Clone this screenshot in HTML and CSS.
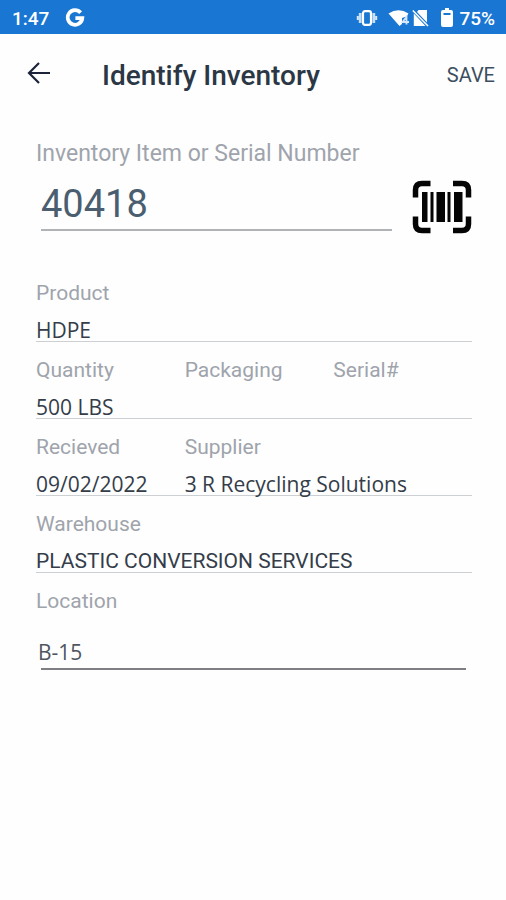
FILE: index.html
```html
<!DOCTYPE html>
<html lang="en">
<head>
<meta charset="utf-8">
<meta name="viewport" content="width=device-width, initial-scale=1">
<title>Identify Inventory</title>
<link rel="stylesheet" href="styles.css">
</head>
<body>
<div class="status-bar">
  <span class="status-time">1:47</span>
  <svg class="icon-google" viewBox="0 0 20 20" aria-hidden="true"><path d="M15.6 4.700A7.300 7.300 0 1 0 17.300 10.200H10.400" fill="none" stroke="#fff" stroke-width="3.700"/></svg>
  <div class="status-icons">
    <svg class="icon-vibrate" viewBox="0 0 22 18" aria-hidden="true"><rect x="7" y="2.200" width="8" height="13.600" rx="2" fill="none" stroke="#fff" stroke-width="2.200"/><path d="M4.200 4v10M17.800 4v10" stroke="#c5defa" stroke-width="2.800"/><path d="M1.800 7v4M20.200 7v4" stroke="#dcebfb" stroke-width="2"/></svg>
    <svg class="icon-wifi" viewBox="0 0 22 18" aria-hidden="true"><path d="M.5 4.500Q10.500-1.800 20.500 4.500L18.500 7.500 14 9v6l-2.500 2Z" fill="#fff"/><path d="M18.500 15.500V8l-4 5h6.500" fill="none" stroke="#d5e7fb" stroke-width="1.800"/></svg>
    <svg class="icon-sim" viewBox="0 0 17 18" aria-hidden="true"><path d="M6.500 1H15v12.500L5 3ZM1.800 4.500 13.500 17H1.800Z" fill="#fff"/><path d="M.8 1.500 16 17" stroke="#fff" stroke-width="1.500"/></svg>
    <svg class="icon-battery" viewBox="0 0 12 20" aria-hidden="true"><path d="M4 0h4v2h2q2 0 2 2v13q0 2-2 2H2q-2 0-2-2V4q0-2 2-2h2Z" fill="#fff"/><path d="M2.500 5h7v2h-7Z" fill="#1976d2"/></svg>
    <span class="status-battery">75%</span>
  </div>
</div>

<header class="app-bar">
  <button class="back" type="button" aria-label="Back">
    <svg viewBox="0 0 24 24" aria-hidden="true"><path d="M23 12H2.500M12 2 2 12l10 10" fill="none" stroke="#1d2339" stroke-width="2.200"/></svg>
  </button>
  <h1 class="title">Identify Inventory</h1>
  <button class="save" type="submit" form="inventory">SAVE</button>
</header>

<form class="content" id="inventory">
  <label class="search-label" for="item">Inventory Item or Serial Number</label>
  <div class="search">
    <input class="search-input" id="item" type="text" value="40418">
    <button class="scan" type="button" aria-label="Scan barcode">
      <svg viewBox="0 0 60 54" aria-hidden="true"><path d="M18.500 3.500H10Q3.500 3.500 3.500 10v7.500M41 3.500h9q6.500 0 6.500 6.500v7.500M18.500 50.500H10q-6.500 0-6.500-6.500v-7.500M41 50.500h9q6.500 0 6.500-6.500v-7.500" fill="none" stroke="#050505" stroke-width="5.500"/><path d="M10 12h5.500v30H10ZM18.500 12H21.500v30h-3ZM24.500 12H33v30h-8.500ZM35.500 12H38.500v30h-3ZM42 12h8.500v30H42Z" fill="#050505"/></svg>
    </button>
  </div>

  <div class="row">
    <dl class="field full"><dt>Product</dt><dd>HDPE</dd></dl>
  </div>
  <div class="row">
    <dl class="field"><dt>Quantity</dt><dd>500 LBS</dd></dl>
    <dl class="field"><dt>Packaging</dt><dd></dd></dl>
    <dl class="field"><dt>Serial#</dt><dd></dd></dl>
  </div>
  <div class="row">
    <dl class="field"><dt>Recieved</dt><dd>09/02/2022</dd></dl>
    <dl class="field double"><dt>Supplier</dt><dd>3 R Recycling Solutions</dd></dl>
  </div>
  <div class="row">
    <dl class="field full"><dt>Warehouse</dt><dd class="warehouse">PLASTIC CONVERSION SERVICES</dd></dl>
  </div>
  <label class="location-label" for="location">Location</label>
  <input class="location-input" id="location" type="text" value="B-15">
</form>
</body>
</html>
```

FILE: styles.css
```css
* {
  box-sizing: border-box;
}

body {
  margin: 0;
  background: #fefefe;
  color: #343d49;
  font-family: Roboto, "Liberation Sans", sans-serif;
}

button {
  padding: 0;
  border: 0;
  background: none;
  font: inherit;
  cursor: pointer;
}

svg {
  display: block;
}

.status-bar {
  display: flex;
  align-items: center;
  height: 34px;
  padding: 2px 11px 0 12px;
  background: #1976d2;
  color: #fff;
  font-size: 19px;
  font-weight: 500;
}

.icon-google {
  width: 20px;
  height: 20px;
  margin-left: 16px;
}

.status-icons {
  display: flex;
  align-items: center;
  margin-left: auto;
}

.icon-vibrate {
  width: 22px;
  height: 18px;
  margin-right: 10px;
}

.icon-wifi {
  width: 22px;
  height: 18px;
  margin-right: 2px;
}

.icon-sim {
  width: 17px;
  height: 18px;
  margin-right: 12px;
}

.icon-battery {
  width: 12px;
  height: 20px;
  margin-right: 6px;
}

.app-bar {
  display: flex;
  align-items: center;
  height: 84px;
  padding: 0 11px 0 27px;
}

.back {
  width: 24px;
  height: 24px;
  margin-bottom: 6px;
}

.title {
  flex: 1;
  margin: 0 0 0 51px;
  color: #2b3744;
  font-size: 28px;
  font-weight: 500;
  line-height: 32px;
}

.save {
  margin-bottom: 2px;
  color: #3c4e60;
  font-size: 20px;
}

.content {
  padding: 24px 34px 0 36px;
}

.search-label,
.location-label,
.field dt {
  display: block;
  color: #9fa4ac;
  font-size: 21px;
  line-height: 24px;
}

.search-label {
  font-size: 23px;
}

.search {
  display: flex;
  gap: 20px;
  margin-bottom: 47px;
  padding-left: 5px;
}

.search-input {
  flex: 1;
  min-width: 0;
  height: 52px;
  margin-top: 13px;
  padding: 0;
  border: 0;
  border-bottom: 2px solid #b0b4b6;
  background: none;
  color: #4a5e70;
  font: 38px Roboto, sans-serif;
  outline: 0;
}

.scan {
  width: 60px;
  height: 54px;
  margin-top: 14px;
}

.row {
  display: grid;
  grid-template-columns: repeat(3, 1fr);
  column-gap: 10px;
  margin-bottom: 16px;
  border-bottom: 1px solid #ccd0d2;
}

.field {
  min-width: 0;
  margin: 0;
}

.double {
  grid-column: span 2;
}

.full {
  grid-column: 1 / -1;
}

.field dd {
  height: 24px;
  margin: 12px 0 0;
  font-family: "Open Sans", sans-serif;
  font-size: 21px;
  line-height: 26px;
  white-space: nowrap;
}

.field .warehouse {
  font-family: Roboto, sans-serif;
}

.location-input {
  display: block;
  width: calc(100% - 8px);
  height: 38px;
  margin: 19px 6px 0 2px;
  padding: 2px 0 0;
  border: 0;
  background: linear-gradient(#7d7f83, #7d7f83) 3px 100% / 100% 2px no-repeat;
  color: #50565f;
  font: 21px "Open Sans", sans-serif;
  outline: 0;
}
```
